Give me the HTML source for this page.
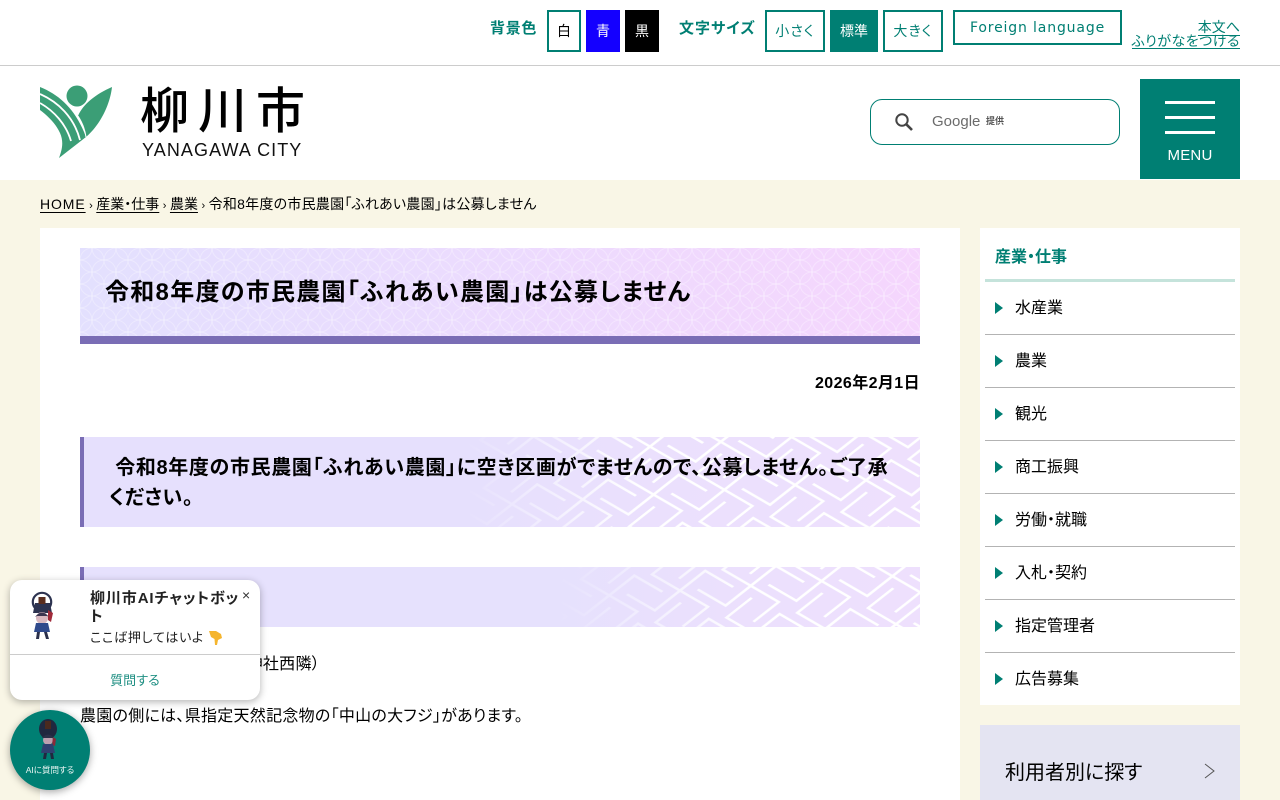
<!DOCTYPE html>
<html lang="ja"><head><meta charset="utf-8"><title>柳川市</title>
<style>
html,body{margin:0;padding:0;width:1280px;height:800px;overflow:hidden;background:#f9f6e6}
body{position:relative;font-family:"Liberation Sans","Noto Sans CJK JP",sans-serif;font-feature-settings:"palt";color:#000}
.a{position:absolute;white-space:nowrap}
.t{color:#007f73}
.btn{position:absolute;box-sizing:border-box;height:42px;top:10px;border:2px solid #007f73;background:#fff;color:#007f73;font-size:14px;display:flex;align-items:center;justify-content:center}
.k{letter-spacing:1.1px}
.b{font-weight:bold}
.line{position:absolute;left:1165px;width:50px;height:3px;background:#fff}
.it{position:absolute;left:985px;width:250px;height:53px;box-sizing:border-box;border-bottom:1px solid #b3b3b3}
.it i{position:absolute;left:10px;top:20px;width:0;height:0;border-left:8px solid #007f73;border-top:6px solid transparent;border-bottom:6px solid transparent}
.it span{position:absolute;left:30px;top:15px;font-size:16px;line-height:24px;white-space:nowrap}
u{text-underline-offset:3px}
</style></head><body>
<div class="a" style="left:0;top:0;width:1280px;height:180px;background:#fff"></div>
<div class="a" style="left:0;top:65px;width:1280px;height:1px;background:#ccc"></div>

<div class="a t b" style="left:490px;top:18px;font-size:15px;line-height:22px;letter-spacing:.7px">背景色</div>
<div class="btn" style="left:547px;width:34px;color:#000">白</div>
<div class="btn" style="left:586px;width:34px;background:#1400ff;border:0;color:#fff">青</div>
<div class="btn" style="left:625px;width:34px;background:#000;border:0;color:#fff">黒</div>
<div class="a t b" style="left:679px;top:18px;font-size:15px;line-height:22px;letter-spacing:1px">文字サイズ</div>
<div class="btn k" style="left:765px;width:60px">小さく</div>
<div class="btn" style="left:830px;width:48px;background:#007f73;border:0;color:#fff">標準</div>
<div class="btn k" style="left:883px;width:60px">大きく</div>
<div class="btn" style="left:953px;width:169px;height:35px;font-family:'DejaVu Sans','Liberation Sans',sans-serif;font-size:14px;letter-spacing:.85px">Foreign language</div>
<div class="a t" style="right:40px;top:18px;font-size:14px;line-height:18px;border-bottom:1px solid #007f73;height:17px">本文へ</div>
<div class="a t" style="right:40px;top:32px;font-size:14px;line-height:18px;border-bottom:1px solid #007f73;height:16px;letter-spacing:.5px">ふりがなをつける</div>

<svg class="a" style="left:40px;top:80px" width="75" height="82" viewBox="40 80 75 82">
<circle cx="77" cy="96" r="10.5" fill="#3b9e76"/>
<path d="M112 87C96 94 83 104 78 116C82 122 85 130 86 137C100 125 110 105 112 87Z" fill="#3b9e76"/>
<path d="M40 87C60 95 76 110 86 137L59 158C62 150 64 142 60 133C56 124 48 116 40 110Z" fill="#3b9e76"/>
<path d="M78 116C82 122 85 130 86 137" fill="none" stroke="#fff" stroke-width="1"/>
<path d="M40 94C58 102 74 117 80 140" fill="none" stroke="#fff" stroke-width="1.8"/>
<path d="M40 103C54 111 66 124 71 141" fill="none" stroke="#fff" stroke-width="1.8"/>
</svg>
<div class="a" style="left:140px;top:73px;font-size:49px;line-height:70px;letter-spacing:9px;font-weight:500;font-family:'Noto Sans CJK JP',sans-serif;font-feature-settings:normal">柳川市</div>
<div class="a" style="left:142px;top:139px;font-size:18px;line-height:22px;letter-spacing:1.08px;color:#111">YANAGAWA CITY</div>

<div class="a" style="left:870px;top:99px;width:250px;height:46px;box-sizing:border-box;border:1px solid #007f73;border-radius:12px;background:#fff"></div>
<svg class="a" style="left:892px;top:110px" width="24" height="24" viewBox="0 0 24 24"><circle cx="10" cy="10" r="5.7" fill="none" stroke="#444" stroke-width="2"/><path d="M14.3 14.3L20 20" stroke="#444" stroke-width="2.6"/></svg>
<div class="a" style="left:932px;top:112px;font-size:15px;line-height:20px;color:#6b6b6b">Google</div>
<div class="a b" style="left:986px;top:114px;font-size:9px;line-height:14px;color:#555">提供</div>

<div class="a" style="left:1140px;top:79px;width:100px;height:100px;background:#007f73"></div>
<div class="line" style="top:101px"></div><div class="line" style="top:116px"></div><div class="line" style="top:131px"></div>
<div class="a" style="left:1140px;width:100px;top:146px;text-align:center;color:#fff;font-size:15px;line-height:20px;letter-spacing:.2px">MENU</div>

<div class="a" style="left:40px;top:194px;font-size:14px;line-height:20px;word-spacing:-.4px"><u style="letter-spacing:.9px">HOME</u> <span style="font-size:11px">›</span> <u>産業・仕事</u> <span style="font-size:11px">›</span> <u>農業</u> <span style="font-size:11px">›</span> <span style="letter-spacing:.24px">令和8年度の市民農園「ふれあい農園」は公募しません</span></div>

<div class="a" style="left:40px;top:228px;width:920px;height:572px;background:#fff"></div>

<svg class="a" style="left:80px;top:248px" width="840" height="88">
<defs>
<linearGradient id="g1"><stop offset="0" stop-color="#e3e0fe"/><stop offset="1" stop-color="#f5d6fd"/></linearGradient>
<pattern id="sh" width="24" height="24" patternUnits="userSpaceOnUse">
<g fill="none" stroke="#fff" stroke-opacity=".3" stroke-width="1">
<circle cx="0" cy="0" r="12"/><circle cx="24" cy="0" r="12"/><circle cx="0" cy="24" r="12"/><circle cx="24" cy="24" r="12"/><circle cx="12" cy="12" r="12"/>
</g></pattern>
</defs>
<rect width="840" height="88" fill="url(#g1)"/><rect width="840" height="88" fill="url(#sh)"/>
</svg>
<div class="a" style="left:80px;top:336px;width:840px;height:8px;background:#7a6db5"></div>
<div class="a b" style="left:105px;top:275px;font-size:24px;line-height:36px;letter-spacing:1.28px">令和8年度の市民農園「ふれあい農園」は公募しません</div>
<div class="a b" style="right:360px;top:373px;font-size:16px;line-height:22px;letter-spacing:.4px">2026年2月1日</div>

<svg class="a" style="left:80px;top:437px" width="840" height="90">
<defs>
<linearGradient id="g2"><stop offset="0" stop-color="#e4e0fd"/><stop offset="1" stop-color="#eee0fd"/></linearGradient>
<linearGradient id="f1"><stop offset=".46" stop-color="#e6e0fd"/><stop offset=".67" stop-color="#e8e0fd" stop-opacity="0"/></linearGradient>
<linearGradient id="f2"><stop offset=".57" stop-color="#e6e1fd"/><stop offset=".80" stop-color="#e8e0fd" stop-opacity="0"/></linearGradient>
<pattern id="sa" width="8" height="8" patternUnits="userSpaceOnUse" patternTransform="matrix(8.4 -6.6 9.3 5.4 0 0)">
<g fill="none" stroke="#fff" stroke-width=".25">
<path d="M-3 -3V0H3V3M3 -3H0V3H-3"/>
<path d="M-3 -3V0H3V3M3 -3H0V3H-3" transform="translate(8 0)"/>
<path d="M-3 -3V0H3V3M3 -3H0V3H-3" transform="translate(0 8)"/>
<path d="M-3 -3V0H3V3M3 -3H0V3H-3" transform="translate(8 8)"/>
<path d="M-3 -3V0H3V3M3 -3H0V3H-3" transform="translate(4 4)"/>
</g>
</pattern>
</defs>
<rect width="840" height="90" fill="url(#g2)"/><rect width="840" height="90" fill="url(#sa)"/><rect width="840" height="90" fill="url(#f1)"/>
<rect width="4" height="90" fill="#7a6db5"/>
</svg>
<div class="a b" style="left:109px;top:453px;width:785px;font-size:20px;line-height:30px;letter-spacing:.65px;white-space:normal">&nbsp;令和8年度の市民農園「ふれあい農園」に空き区画がでませんので、公募しません。ご了承ください。</div>

<svg class="a" style="left:80px;top:567px" width="840" height="60">
<rect width="840" height="60" fill="url(#g2)"/><g transform="translate(30 14)"><rect x="-30" y="-14" width="840" height="60" fill="url(#sa)"/></g><rect width="840" height="60" fill="url(#f2)"/>
<rect width="4" height="60" fill="#7a6db5"/>
</svg>

<div class="a" style="right:960px;top:653px;font-size:16px;line-height:24px;letter-spacing:.27px">場所：柳川市大和町（中山神社西隣）</div>
<div class="a" style="left:80px;top:705px;font-size:16px;line-height:24px;letter-spacing:.27px">農園の側には、県指定天然記念物の「中山の大フジ」があります。</div>

<div class="a" style="left:980px;top:228px;width:260px;height:477px;background:#fff"></div>
<div class="a t b" style="left:995px;top:247px;font-size:16px;line-height:22px">産業・仕事</div>
<div class="a" style="left:985px;top:279px;width:250px;height:3px;background:#c5e3db"></div>
<div class="it" style="top:282px"><i></i><span>水産業</span></div>
<div class="it" style="top:335px"><i></i><span>農業</span></div>
<div class="it" style="top:388px"><i></i><span>観光</span></div>
<div class="it" style="top:441px"><i></i><span>商工振興</span></div>
<div class="it" style="top:494px"><i></i><span>労働・就職</span></div>
<div class="it" style="top:547px"><i></i><span>入札・契約</span></div>
<div class="it" style="top:600px"><i></i><span>指定管理者</span></div>
<div class="it" style="top:653px;border:0"><i></i><span>広告募集</span></div>

<div class="a" style="left:980px;top:725px;width:260px;height:75px;background:#e4e4f2"></div>
<div class="a" style="left:1005px;top:758px;font-size:20px;line-height:30px">利用者別に探す</div>
<svg class="a" style="left:1203px;top:762px" width="14" height="18"><path d="M2 2L11 9L2 16" fill="none" stroke="#555" stroke-width="1"/></svg>

<div class="a" style="left:10px;top:580px;width:250px;height:120px;background:#fff;border-radius:12px;box-shadow:0 2px 8px rgba(0,0,0,.3)"></div>
<svg class="a" style="left:22px;top:590px" width="40" height="54" viewBox="0 0 40 54">
<circle cx="20" cy="12" r="9.200" fill="none" stroke="#2d3350" stroke-width="2.2"/>
<path d="M13 13h15l2 10H11z" fill="#2d3350"/>
<path d="M16.500 7h7v7h-7z" fill="#5a2d1e"/>
<circle cx="20" cy="28" r="6" fill="#d8b8c0"/>
<path d="M13 27q7-9 14 0l-2-1H15z" fill="#3a3550"/>
<path d="M26 20l5 3-2 9-3-2z" fill="#a02a3a"/>
<path d="M14 33h12l2 9H12z" fill="#2f4a8c"/>
<path d="M15 42l-1 7h3l1-7zM22 42l2 7h3l-2-7z" fill="#2a2f4a"/>
</svg>
<div class="a b" style="left:90px;top:590px;width:155px;font-size:15px;line-height:18px;letter-spacing:.9px;white-space:normal;color:#222">柳川市AIチャットボット</div>
<div class="a" style="left:242px;top:586px;font-size:14px;line-height:18px;color:#333">×</div>
<div class="a" style="left:90px;top:628px;font-size:13px;line-height:20px;letter-spacing:.75px;color:#222">ここば押してはいよ</div>
<svg class="a" style="left:208px;top:630px" width="15" height="16" viewBox="0 0 15 16"><path d="M1 1h7l5 3 1 4-4 2-1 5H7L6.500 9 3 7z" fill="#f5b52e"/></svg>
<div class="a" style="left:10px;top:654px;width:250px;height:1px;background:#ccc"></div>
<div class="a" style="left:10px;top:671px;width:250px;text-align:center;font-size:13px;line-height:20px;letter-spacing:.1px;color:#1f8f83">質問する</div>

<div class="a" style="left:10px;top:710px;width:80px;height:80px;border-radius:50%;background:#007f73;box-shadow:0 2px 8px rgba(0,0,0,.35)"></div>
<svg class="a" style="left:30px;top:716px" width="40" height="48" viewBox="0 0 40 48">
<ellipse cx="18" cy="13" rx="9" ry="10" fill="#20283f"/>
<path d="M15 5h6v8h-6z" fill="#4a2a1e"/>
<circle cx="18" cy="24" r="5" fill="#bda0b0"/>
<path d="M12 22q6-7 12 0z" fill="#2c3048"/>
<path d="M23 21l3 2-1 7-3-1z" fill="#8a2a3a"/>
<path d="M13 28h10l2 9H11z" fill="#2f4070"/>
<path d="M14 37l-1 6h3l1-6zM20 37l1 6h3l-1-6z" fill="#20283f"/>
</svg>
<div class="a" style="left:10px;top:763px;width:80px;text-align:center;font-size:8.500px;line-height:14px;color:#e8f4f2">AIに質問する</div>
</body></html>
